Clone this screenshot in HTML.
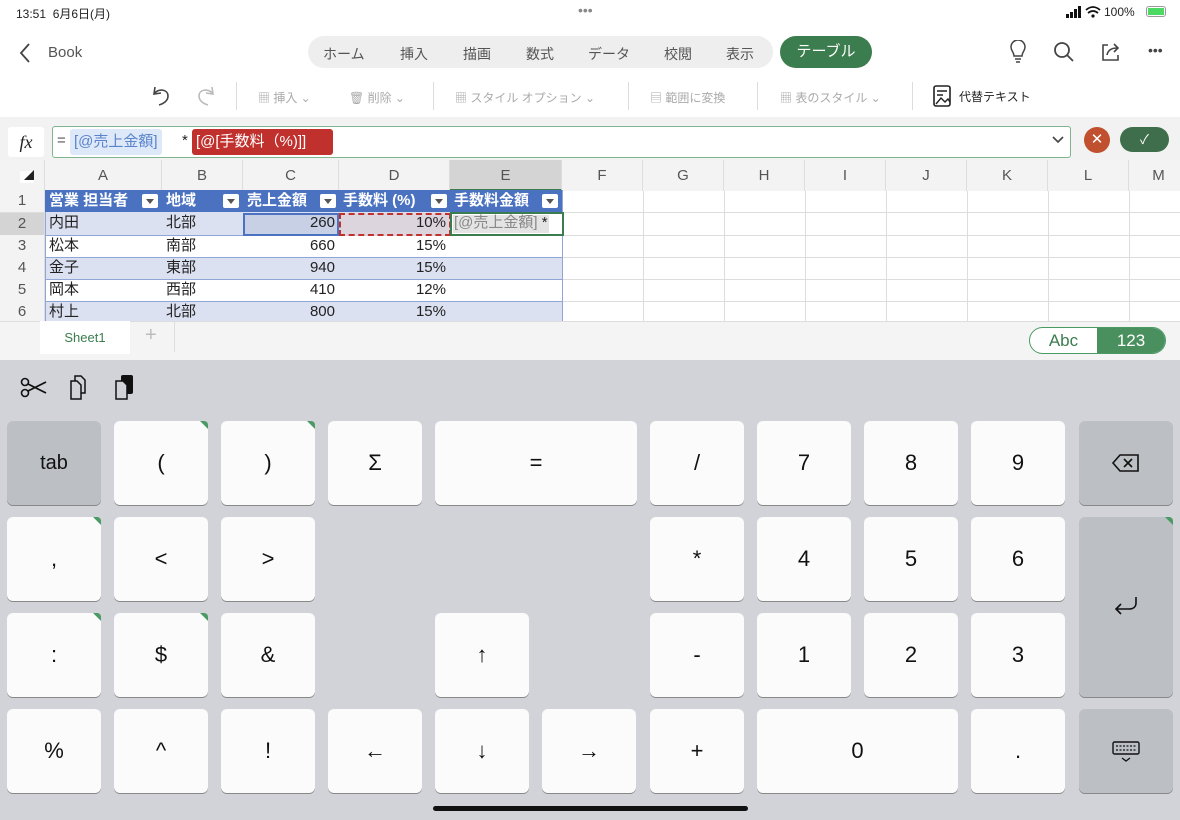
<!DOCTYPE html>
<html><head><meta charset="utf-8"><style>
*{box-sizing:border-box;margin:0;padding:0}
body{width:1180px;height:820px;position:relative;overflow:hidden;background:#fff;font-family:"Liberation Sans","Noto Sans CJK JP",sans-serif;color:#222}
.a{position:absolute;white-space:nowrap}
.tab{color:#555;font-size:14px}
.tb{color:#aaa;font-size:12px}
.col{position:absolute;top:160px;height:31px;border-right:1px solid #ddd;text-align:center;line-height:31px;font-size:15px;color:#555;background:#f3f3f3}
.hl{position:absolute;left:0;width:1180px;height:1px;background:#ddd}
.rh{position:absolute;left:0;width:45px;text-align:center;font-size:15px;color:#555;background:#f3f3f3;height:22px;line-height:22px;border-right:1px solid #ddd}
.c{position:absolute;height:22px;line-height:22px;font-size:15px;padding:0 4px;white-space:nowrap;overflow:hidden}
.r{text-align:right}
.k{position:absolute;background:#fbfbfb;border-radius:6px;box-shadow:0 1px 0 #888;text-align:center;font-size:22px;color:#111}
.d{background:#bcbfc4}
.g::after{content:"";position:absolute;right:0;top:0;border-top:8px solid #4a9a64;border-left:8px solid transparent;border-top-right-radius:4px}
.hd{position:absolute;top:190px;height:22px;background:#4a72c0;color:#fff;font-weight:bold;font-size:15px;line-height:22px;padding-left:4px;white-space:nowrap}
.dd{position:absolute;top:194px;width:16px;height:14px;background:#fff;border-radius:2px}
.dd::after{content:"";position:absolute;left:4px;top:5px;border-top:5px solid #555;border-left:4px solid transparent;border-right:4px solid transparent}
</style></head><body>
<div class="a" style="left:16px;top:5px;font-size:12px">13:51&nbsp; 6月6日(月)</div>
<div class="a" style="left:578px;top:2px;font-size:14px;color:#888">•••</div>
<svg class="a" style="left:1066px;top:6px" width="46" height="12"><rect x="0" y="8" width="3" height="4" fill="#111"/><rect x="4" y="6" width="3" height="6" fill="#111"/><rect x="8" y="3" width="3" height="9" fill="#111"/><rect x="12" y="0" width="3" height="12" fill="#111"/><path d="M20 4 Q27 -2 34 4 M22 7 Q27 3 32 7" stroke="#111" stroke-width="1.8" fill="none"/><circle cx="27" cy="10" r="1.6" fill="#111"/></svg>
<div class="a" style="left:1104px;top:5px;font-size:12px">100%</div>
<div class="a" style="left:1146px;top:6px;width:20px;height:11px;border:1px solid #999;border-radius:3px"><div style="margin:1px;height:7px;background:#4cd964"></div></div>
<svg class="a" style="left:18px;top:42px" width="14" height="22"><path d="M11 2 L3 11 L11 20" stroke="#444" stroke-width="1.8" fill="none"/></svg>
<div class="a" style="left:48px;top:44px;font-size:15px;color:#555">Book</div>
<div class="a" style="left:308px;top:36px;width:465px;height:32px;border-radius:16px;background:#eee"></div>
<div class="a tab" style="left:323px;top:44px">ホーム</div>
<div class="a tab" style="left:400px;top:44px">挿入</div>
<div class="a tab" style="left:463px;top:44px">描画</div>
<div class="a tab" style="left:526px;top:44px">数式</div>
<div class="a tab" style="left:588px;top:44px">データ</div>
<div class="a tab" style="left:664px;top:44px">校閲</div>
<div class="a tab" style="left:726px;top:44px">表示</div>
<div class="a" style="left:780px;top:36px;width:92px;height:32px;border-radius:16px;background:#3b7d4e;color:#fff;font-size:15px;text-align:center;line-height:32px">テーブル</div>
<svg class="a" style="left:1008px;top:40px" width="20" height="24"><path d="M6 16 C6 12 3 11 3 7 A7 7 0 0 1 17 7 C17 11 14 12 14 16 Z M7 19 H13 M8 22 H12" stroke="#444" stroke-width="1.5" fill="none"/></svg>
<svg class="a" style="left:1053px;top:41px" width="22" height="22"><circle cx="9" cy="9" r="7" stroke="#444" stroke-width="1.8" fill="none"/><path d="M14 14 L20 20" stroke="#444" stroke-width="1.8"/></svg>
<svg class="a" style="left:1100px;top:41px" width="22" height="22"><path d="M8 4 H3 V19 H18 V14" stroke="#444" stroke-width="1.6" fill="none"/><path d="M7 14 C8 9 12 7 17 7 M14 3 L18 7 L14 11" stroke="#444" stroke-width="1.6" fill="none"/></svg>
<div class="a" style="left:1148px;top:42px;font-size:14px;color:#444">•••</div>
<svg class="a" style="left:150px;top:84px" width="22" height="24"><path d="M5 3 L4 10 L11 9 M4 10 C8 4 18 5 18 12 C18 17 13 20 9 21" stroke="#444" stroke-width="1.6" fill="none"/></svg>
<svg class="a" style="left:195px;top:84px" width="22" height="24"><path d="M17 3 L18 10 L11 9 M18 10 C14 4 4 5 4 12 C4 17 9 20 13 21" stroke="#bbb" stroke-width="1.6" fill="none"/></svg>
<div class="a" style="left:236px;top:82px;width:1px;height:28px;background:#ddd"></div>
<div class="a tb" style="left:258px;top:89px">▦ 挿入 ⌄</div>
<div class="a tb" style="left:349px;top:89px">🗑 削除 ⌄</div>
<div class="a" style="left:433px;top:82px;width:1px;height:28px;background:#ddd"></div>
<div class="a tb" style="left:455px;top:89px">▦ スタイル オプション ⌄</div>
<div class="a" style="left:628px;top:82px;width:1px;height:28px;background:#ddd"></div>
<div class="a tb" style="left:650px;top:89px">▤ 範囲に変換</div>
<div class="a" style="left:757px;top:82px;width:1px;height:28px;background:#ddd"></div>
<div class="a tb" style="left:780px;top:89px">▦ 表のスタイル ⌄</div>
<div class="a" style="left:912px;top:82px;width:1px;height:28px;background:#ddd"></div>
<svg class="a" style="left:932px;top:84px" width="22" height="24"><rect x="2" y="2" width="16" height="20" rx="2" stroke="#222" stroke-width="1.6" fill="none"/><path d="M5 7 H15 M5 11 H11 M4 20 L9 14 L13 18 L16 15 L18 18" stroke="#222" stroke-width="1.4" fill="none"/></svg>
<div class="a" style="left:959px;top:88px;font-size:12px;color:#222">代替テキスト</div>
<div class="a" style="left:0;top:117px;width:1180px;height:43px;background:#f2f2f2"></div>
<div class="a" style="left:8px;top:127px;width:36px;height:30px;background:#fff;border-radius:3px;font-family:'Liberation Serif',serif;font-style:italic;font-size:18px;text-align:center;line-height:30px">fx</div>
<div class="a" style="left:52px;top:126px;width:1019px;height:32px;background:#fff;border:1px solid #7fb58f;border-radius:3px"></div>
<div class="a" style="left:57px;top:132px;font-size:15px;color:#555">=</div>
<div class="a" style="left:70px;top:129px;width:110px;height:26px;background:#dde8f8;border-radius:3px;color:#5b84cc;font-size:15px;line-height:26px;padding-left:4px;width:auto;padding-right:4px">[@売上金額]</div>
<div class="a" style="left:182px;top:132px;font-size:15px">*</div>
<div class="a" style="left:192px;top:129px;width:141px;height:26px;background:#c0302d;border-radius:3px;color:#fff;font-size:15px;line-height:26px;padding-left:4px">[@[手数料（%)]]</div>
<svg class="a" style="left:1052px;top:135px" width="12" height="10"><path d="M1 2 L6 7 L11 2" stroke="#444" stroke-width="1.6" fill="none"/></svg>
<div class="a" style="left:1084px;top:127px;width:26px;height:26px;border-radius:13px;background:#c0502e;color:#fff;text-align:center;line-height:26px;font-size:15px">✕</div>
<div class="a" style="left:1120px;top:127px;width:49px;height:25px;border-radius:13px;background:#3f6e4c;color:#fff;text-align:center;line-height:25px;font-size:13px">✓</div>
<!-- grid -->
<div class="a" style="left:0;top:160px;width:45px;height:31px;background:#f3f3f3;border-right:1px solid #ddd"><div style="margin:11px 0 0 20px;width:14px;height:12px;background:#fff;border-radius:2px;font-size:10px;line-height:12px;text-align:right">◢</div></div>
<div class="col" style="left:45px;width:117px">A</div>
<div class="col" style="left:162px;width:81px">B</div>
<div class="col" style="left:243px;width:96px">C</div>
<div class="col" style="left:339px;width:111px">D</div>
<div class="col" style="left:450px;width:112px;background:#d4d4d4;border-bottom:2px solid #3b7d4e">E</div>
<div class="col" style="left:562px;width:81px">F</div>
<div class="col" style="left:643px;width:81px">G</div>
<div class="col" style="left:724px;width:81px">H</div>
<div class="col" style="left:805px;width:81px">I</div>
<div class="col" style="left:886px;width:81px">J</div>
<div class="col" style="left:967px;width:81px">K</div>
<div class="col" style="left:1048px;width:81px">L</div>
<div class="col" style="left:1129px;width:60px">M</div>
<div class="a" style="left:562px;top:191px;width:618px;height:130px;background:linear-gradient(90deg,#ddd 1px,transparent 1px) 0 0/81px 100%"></div>
<div class="hl" style="top:212px"></div><div class="hl" style="top:235px"></div><div class="hl" style="top:257px"></div><div class="hl" style="top:279px"></div><div class="hl" style="top:301px"></div>
<div class="rh" style="top:190px">1</div><div class="rh" style="top:213px;background:#d4d4d4">2</div><div class="rh" style="top:235px">3</div><div class="rh" style="top:257px">4</div><div class="rh" style="top:279px">5</div><div class="rh" style="top:301px">6</div>
<div class="a" style="left:45px;top:212px;width:517px;height:23px;background:#dbe1f1"></div>
<div class="a" style="left:45px;top:257px;width:517px;height:22px;background:#dbe1f1"></div>
<div class="a" style="left:45px;top:301px;width:517px;height:20px;background:#dbe1f1"></div>
<div class="a" style="left:45px;top:190px;width:518px;height:131px;border-left:1px solid #8fa6d6;border-right:1px solid #8fa6d6"></div>
<div class="a" style="left:45px;top:235px;width:517px;height:1px;background:#8fa6d6"></div>
<div class="a" style="left:45px;top:257px;width:517px;height:1px;background:#8fa6d6"></div>
<div class="a" style="left:45px;top:279px;width:517px;height:1px;background:#8fa6d6"></div>
<div class="a" style="left:45px;top:301px;width:517px;height:1px;background:#8fa6d6"></div>
<div class="hd" style="left:45px;width:117px">営業 担当者</div><div class="dd" style="left:142px"></div>
<div class="hd" style="left:162px;width:81px">地域</div><div class="dd" style="left:223px"></div>
<div class="hd" style="left:243px;width:96px">売上金額</div><div class="dd" style="left:320px"></div>
<div class="hd" style="left:339px;width:111px">手数料 (%)</div><div class="dd" style="left:431px"></div>
<div class="hd" style="left:450px;width:112px">手数料金額</div><div class="dd" style="left:542px"></div>
<div class="a" style="left:243px;top:213px;width:96px;height:23px;background:#c8d0e6;border:2px solid #4a72c0"></div>
<div class="a" style="left:339px;top:213px;width:112px;height:23px;background:#ddd5de;border:2px dashed #c0302d"></div>
<div class="a" style="left:450px;top:212px;width:114px;height:24px;border:2px solid #3b7d4e;background:#fff"></div>
<div class="a" style="left:453px;top:215px;width:96px;height:18px;background:#e4e4e4"></div>
<div class="c" style="left:450px;top:212px;color:#888">[@売上金額] <span style="color:#222">*</span></div>
<div class="c" style="left:45px;top:212px">内田</div><div class="c" style="left:162px;top:212px">北部</div><div class="c r" style="left:243px;top:212px;width:96px">260</div><div class="c r" style="left:339px;top:212px;width:111px">10%</div>
<div class="c" style="left:45px;top:235px">松本</div><div class="c" style="left:162px;top:235px">南部</div><div class="c r" style="left:243px;top:235px;width:96px">660</div><div class="c r" style="left:339px;top:235px;width:111px">15%</div>
<div class="c" style="left:45px;top:257px">金子</div><div class="c" style="left:162px;top:257px">東部</div><div class="c r" style="left:243px;top:257px;width:96px">940</div><div class="c r" style="left:339px;top:257px;width:111px">15%</div>
<div class="c" style="left:45px;top:279px">岡本</div><div class="c" style="left:162px;top:279px">西部</div><div class="c r" style="left:243px;top:279px;width:96px">410</div><div class="c r" style="left:339px;top:279px;width:111px">12%</div>
<div class="c" style="left:45px;top:301px;height:20px">村上</div><div class="c" style="left:162px;top:301px;height:20px">北部</div><div class="c r" style="left:243px;top:301px;width:96px;height:20px">800</div><div class="c r" style="left:339px;top:301px;width:111px;height:20px">15%</div>
<!-- sheet bar -->
<div class="a" style="left:0;top:321px;width:1180px;height:40px;background:#f4f4f4;border-top:1px solid #ddd"></div>
<div class="a" style="left:40px;top:321px;width:90px;height:33px;background:#fff;color:#3b7d4e;font-size:13px;text-align:center;line-height:33px">Sheet1</div>
<div class="a" style="left:145px;top:324px;font-size:20px;color:#bbb">+</div>
<div class="a" style="left:174px;top:322px;width:1px;height:30px;background:#ddd"></div>
<div class="a" style="left:1029px;top:327px;width:137px;height:27px;border:1px solid #4a9a64;border-radius:14px;overflow:hidden;background:#fff;display:flex"><div style="width:67px;text-align:center;line-height:25px;color:#3b7d4e;font-size:17px">Abc</div><div style="width:68px;background:#4a8f5e;color:#fff;text-align:center;line-height:25px;font-size:17px">123</div></div>
<!-- keyboard -->
<div class="a" style="left:0;top:360px;width:1180px;height:460px;background:#d1d3d8"></div>
<svg class="a" style="left:20px;top:376px" width="28" height="24"><circle cx="5" cy="6" r="3.5" stroke="#111" stroke-width="1.6" fill="none"/><circle cx="5" cy="17" r="3.5" stroke="#111" stroke-width="1.6" fill="none"/><path d="M8 8 L26 17 M8 15 L26 6" stroke="#111" stroke-width="1.8"/></svg>
<svg class="a" style="left:68px;top:375px" width="24" height="26"><path d="M7 1 H13 L17 5 V18 H7 Z" stroke="#111" stroke-width="1.5" fill="#d1d3d8"/><path d="M3 6 H9 L13 10 V24 H3 Z" stroke="#111" stroke-width="1.5" fill="#d1d3d8"/></svg>
<svg class="a" style="left:113px;top:374px" width="24" height="28"><rect x="8" y="1" width="12" height="19" rx="2" fill="#111"/><path d="M3 7 H10 L14 11 V25 H3 Z" stroke="#111" stroke-width="1.5" fill="#d1d3d8"/></svg>
<div class="k d" style="left:7px;top:421px;width:94px;height:84px;line-height:84px;font-size:20px">tab</div>
<div class="k g" style="left:114px;top:421px;width:94px;height:84px;line-height:84px">(</div>
<div class="k g" style="left:221px;top:421px;width:94px;height:84px;line-height:84px">)</div>
<div class="k" style="left:328px;top:421px;width:94px;height:84px;line-height:84px">Σ</div>
<div class="k" style="left:435px;top:421px;width:202px;height:84px;line-height:84px">=</div>
<div class="k" style="left:650px;top:421px;width:94px;height:84px;line-height:84px">/</div>
<div class="k" style="left:757px;top:421px;width:94px;height:84px;line-height:84px">7</div>
<div class="k" style="left:864px;top:421px;width:94px;height:84px;line-height:84px">8</div>
<div class="k" style="left:971px;top:421px;width:94px;height:84px;line-height:84px">9</div>
<div class="k d" style="left:1079px;top:421px;width:94px;height:84px"><svg style="margin-top:32px" width="30" height="20"><path d="M9 2 H27 V18 H9 L2 10 Z M13 6 L21 14 M21 6 L13 14" stroke="#111" stroke-width="1.6" fill="none"/></svg></div>
<div class="k g" style="left:7px;top:517px;width:94px;height:84px;line-height:84px">,</div>
<div class="k" style="left:114px;top:517px;width:94px;height:84px;line-height:84px">&lt;</div>
<div class="k" style="left:221px;top:517px;width:94px;height:84px;line-height:84px">&gt;</div>
<div class="k" style="left:650px;top:517px;width:94px;height:84px;line-height:84px">*</div>
<div class="k" style="left:757px;top:517px;width:94px;height:84px;line-height:84px">4</div>
<div class="k" style="left:864px;top:517px;width:94px;height:84px;line-height:84px">5</div>
<div class="k" style="left:971px;top:517px;width:94px;height:84px;line-height:84px">6</div>
<div class="k d g" style="left:1079px;top:517px;width:94px;height:180px"><svg style="margin-top:78px" width="28" height="22"><path d="M24 2 V8 C24 12 21 14 17 14 H4 M9 9 L4 14 L9 19" stroke="#111" stroke-width="1.6" fill="none"/></svg></div>
<div class="k g" style="left:7px;top:613px;width:94px;height:84px;line-height:84px">:</div>
<div class="k g" style="left:114px;top:613px;width:94px;height:84px;line-height:84px">$</div>
<div class="k" style="left:221px;top:613px;width:94px;height:84px;line-height:84px">&amp;</div>
<div class="k" style="left:435px;top:613px;width:94px;height:84px;line-height:84px">↑</div>
<div class="k" style="left:650px;top:613px;width:94px;height:84px;line-height:84px">-</div>
<div class="k" style="left:757px;top:613px;width:94px;height:84px;line-height:84px">1</div>
<div class="k" style="left:864px;top:613px;width:94px;height:84px;line-height:84px">2</div>
<div class="k" style="left:971px;top:613px;width:94px;height:84px;line-height:84px">3</div>
<div class="k" style="left:7px;top:709px;width:94px;height:84px;line-height:84px">%</div>
<div class="k" style="left:114px;top:709px;width:94px;height:84px;line-height:84px">^</div>
<div class="k" style="left:221px;top:709px;width:94px;height:84px;line-height:84px">!</div>
<div class="k" style="left:328px;top:709px;width:94px;height:84px;line-height:84px">←</div>
<div class="k" style="left:435px;top:709px;width:94px;height:84px;line-height:84px">↓</div>
<div class="k" style="left:542px;top:709px;width:94px;height:84px;line-height:84px">→</div>
<div class="k" style="left:650px;top:709px;width:94px;height:84px;line-height:84px">+</div>
<div class="k" style="left:757px;top:709px;width:201px;height:84px;line-height:84px">0</div>
<div class="k" style="left:971px;top:709px;width:94px;height:84px;line-height:84px">.</div>
<div class="k d" style="left:1079px;top:709px;width:94px;height:84px"><svg style="margin-top:32px" width="30" height="22"><rect x="2" y="1" width="26" height="12" rx="1.5" stroke="#111" stroke-width="1.4" fill="none"/><path d="M5 5 H25 M5 9 H25" stroke="#111" stroke-width="1.2" stroke-dasharray="2 1.5"/><path d="M11 17 L15 20 L19 17" stroke="#111" stroke-width="1.3" fill="none"/></svg></div>
<div class="a" style="left:433px;top:806px;width:315px;height:5px;border-radius:3px;background:#111"></div>
</body></html>
